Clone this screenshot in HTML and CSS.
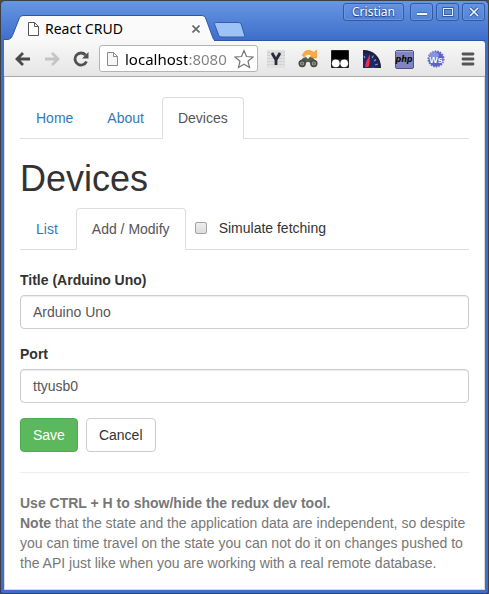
FILE: index.html
```html
<!DOCTYPE html>
<html lang="en">
<head>
<meta charset="utf-8">
<meta name="viewport" content="width=device-width, initial-scale=1">
<title>React CRUD</title>
<link rel="stylesheet" href="styles.css">
</head>
<body>
<div class="window">
  <header class="titlebar">
    <div class="browser-tab">
      <svg class="tab-shape" viewBox="0 0 210 26" preserveAspectRatio="none" aria-hidden="true">
        <path d="M0 26V24.500H3C6 24.500 7.500 23 8.500 20.500L15 4C16 1.500 17 .5 20 .5H197C200 .5 201 1.500 202 4L208 20.500C209 23 209.500 24.500 210 24.500V26Z" fill="#fafafa" stroke="#2f56a5"/>
        <path d="M0 25.500H210" stroke="#f8f8f8"/>
      </svg>
      <svg class="page-icon" viewBox="0 0 11 14" aria-hidden="true"><path d="M.5.5H6.500L10.500 4.500V13.500H.5ZM6.500.5V4.500H10.500" fill="#fff" stroke="#555"/></svg>
      <span class="tab-title">React CRUD</span>
      <button class="tab-close" aria-label="Close tab"><svg viewBox="0 0 8 8"><path d="M.5.5 7.500 7.500M7.500.5.5 7.500" stroke="#666" stroke-width="1.600"/></svg></button>
    </div>
    <button class="new-tab" aria-label="New tab"><svg viewBox="0 0 31 16"><path d="M2.500.5H24C26 .5 27 1.500 27.500 3L30.500 13C31 14.500 30.500 15 29 15H8C6 15 5 14 4.500 12.500L.8 3C0 1.500.8.5 2.500.5Z" fill="#9dc2f5" stroke="#355dab"/></svg></button>
    <div class="window-controls">
      <button class="profile">Cristian</button>
      <button class="control" aria-label="Minimize"><svg viewBox="0 0 12 10"><path d="M1 7H11" stroke="#244a92" stroke-width="3"/><path d="M1 7H11" stroke="#f2f6fc" stroke-width="2"/></svg></button>
      <button class="control" aria-label="Maximize"><svg viewBox="0 0 12 10"><path d="M1.500 1.500H10.500V8.500H1.500Z" fill="none" stroke="#244a92" stroke-width="2.500"/><path d="M1.500 1.500H10.500V8.500H1.500Z" fill="none" stroke="#e4edfa" stroke-width="1.200"/></svg></button>
      <button class="control" aria-label="Close"><svg viewBox="0 0 12 10"><path d="M2 1 10 9M10 1 2 9" stroke="#244a92" stroke-width="3"/><path d="M2 1 10 9M10 1 2 9" stroke="#f2f6fc" stroke-width="1.700"/></svg></button>
    </div>
  </header>

  <div class="toolbar">
    <button class="nav-button" aria-label="Back"><svg viewBox="0 0 16 16"><path d="M8 2 2 8 8 14M2 8H15" fill="none" stroke="#4a4a4a" stroke-width="2.800"/></svg></button>
    <button class="nav-button" aria-label="Forward"><svg viewBox="0 0 16 16"><path d="M8 2 14 8 8 14M14 8H1" fill="none" stroke="#c4c4c4" stroke-width="2.800"/></svg></button>
    <button class="nav-button" aria-label="Reload"><svg viewBox="0 0 16 16"><path d="M12.500 4A6 6 0 1 0 13.500 10.500" fill="none" stroke="#505050" stroke-width="2.800"/><path d="M15.500 1V7.500H9Z" fill="#505050"/></svg></button>
    <div class="address">
      <svg class="page-icon" viewBox="0 0 11 14" aria-hidden="true"><path d="M.5.5H6.500L10.500 4.500V13.500H.5ZM6.500.5V4.500H10.500" fill="#f6f6f6" stroke="#8a8a8a"/></svg>
      <input class="address-input" type="text" aria-label="Address" value="localhost:8080">
      <button class="bookmark" aria-label="Bookmark"><svg viewBox="0 0 20 20"><path d="M10 1.500 12.500 7.500 19 8 14 12.200 15.500 18.500 10 15.200 4.500 18.500 6 12.200 1 8 7.500 7.500Z" fill="#fff" stroke="#777" stroke-width="1.200"/></svg></button>
    </div>
    <div class="extensions">
      <button class="extension" aria-label="Y extension"><svg viewBox="0 0 20 20"><path d="M1 1H19V19H1Z" fill="#e1e1e1"/><path d="M1 3.500H19M1 6.500H19M1 9.500H19M1 12.500H19M1 15.500H19" stroke="#cecece" stroke-dasharray="3 1"/><path d="M6 4 10 11 14 4M10 10V16" fill="none" stroke="#252b3a" stroke-width="2.800"/></svg></button>
      <button class="extension" aria-label="Binoculars"><svg viewBox="0 0 20 20"><path d="M4.500 7C5 3 8 1 12 1.500L16 3.500 18.500 1V9H11L13.500 6.500C11 4.500 8 5 7 7.500Z" fill="#ffad42" stroke="#e98a1b" stroke-width=".6"/><path d="M5 9 8 8 10 10 12 8 15 9 19.500 14 15 17 11 13H9L5 17 .5 14Z" fill="#555b50"/><circle cx="4.200" cy="14.500" r="2.900" fill="#a3a89d" stroke="#444a42" stroke-width="1.600"/><circle cx="15.800" cy="14.500" r="2.900" fill="#a3a89d" stroke="#444a42" stroke-width="1.600"/><circle cx="4.200" cy="14.500" r="1.200" fill="#62685c"/><circle cx="15.800" cy="14.500" r="1.200" fill="#62685c"/></svg></button>
      <button class="extension" aria-label="Script manager"><svg viewBox="0 0 20 20"><rect x="1" y="1" width="18" height="18" rx="1" fill="#222"/><path d="M2 2H18V10H2Z" fill="#000"/><circle cx="5.800" cy="14.300" r="3.900" fill="#fff"/><circle cx="14.200" cy="14.300" r="3.900" fill="#fff"/></svg></button>
      <button class="extension" aria-label="Speed gauge"><svg viewBox="0 0 20 20"><path d="M1 1C12 1 19 8 19 19H1Z" fill="#20246b"/><path d="M1 2.500C11 3 17 9 17.500 19" fill="none" stroke="#20232c" stroke-width="2.500"/><path d="M10 9 11.500 6.500M12 12 14 10.500M13 16 16 15M3 9 2 7" stroke="#8798d4" stroke-width="1.200"/><path d="M3 18 4 13 8 5 7.500 14 6.500 18Z" fill="#ef3038"/><path d="M8 18A5 5 0 0 1 13 19Z" fill="#4a58aa"/></svg></button>
      <button class="extension" aria-label="PHP"><svg viewBox="0 0 20 20"><rect x="1.500" y="1.500" width="18" height="18" rx="1.500" fill="#8184be" stroke="#50538b"/><path d="M2 2.500H19" stroke="#a5a8dc"/><text class="php-text" x="10" y="13" text-anchor="middle">php</text></svg></button>
      <button class="extension" aria-label="Ws"><svg viewBox="0 0 20 20"><circle cx="10" cy="10" r="7.500" fill="#5964c8" stroke="#626bc5" stroke-width="2" stroke-dasharray="1.600 1"/><circle cx="10" cy="10" r="7" fill="#5964c8"/><ellipse cx="8" cy="6" rx="5" ry="3" fill="#8994df"/><text class="ws-text" x="10" y="13.500" text-anchor="middle">Ws</text></svg></button>
      <button class="extension" aria-label="Menu"><svg viewBox="0 0 20 20"><path d="M5 5H15M5 10H15M5 15H15" stroke="#555" stroke-width="2.800" stroke-linecap="round"/></svg></button>
    </div>
  </div>

  <main class="page">
    <nav class="tabs">
      <a class="tab" href="#home">Home</a>
      <a class="tab" href="#about">About</a>
      <a class="tab active" href="#devices">Devices</a>
    </nav>
    <h1>Devices</h1>
    <div class="tabs">
      <a class="tab" href="#list">List</a>
      <a class="tab active" href="#edit">Add / Modify</a>
      <label class="simulate"><input type="checkbox">Simulate fetching</label>
    </div>
    <form class="device-form">
      <div class="field">
        <label for="title">Title (Arduino Uno)</label>
        <input id="title" type="text" value="Arduino Uno">
      </div>
      <div class="field">
        <label for="port">Port</label>
        <input id="port" type="text" value="ttyusb0">
      </div>
      <div class="actions">
        <button class="btn save" type="button">Save</button>
        <button class="btn" type="button">Cancel</button>
      </div>
    </form>
    <hr>
    <p class="note"><strong>Use CTRL + H to show/hide the redux dev tool.</strong></p>
    <p class="note"><strong>Note</strong> that the state and the application data are independent, so despite you can time travel on the state you can not do it on changes pushed to the API just like when you are working with a real remote database.</p>
  </main>
</div>
</body>
</html>
```
FILE: styles.css
```css
* { box-sizing: border-box; }

body {
  margin: 0;
  background: #4b4b4b;
  color: #333;
  font: 14px/20px "Liberation Sans", Arial, sans-serif;
}

button, input { margin: 0; font: inherit; }
button { padding: 0; border: 0; background: none; }
svg { display: block; }

.window {
  display: flex;
  flex-direction: column;
  min-height: 100vh;
  padding: 0 3px 3px;
  border: 1px solid #3b4046;
  border-radius: 5px 5px 3px 3px;
  background: linear-gradient(#6697e2, #3e6dca 40px);
}

.titlebar {
  display: flex;
  align-items: flex-end;
  height: 40px;
  box-shadow: inset 0 -1px #2f56a5;
}

.browser-tab {
  position: relative;
  display: flex;
  align-items: center;
  width: 210px;
  height: 26px;
  padding: 2px 14px 0 24px;
  gap: 6px;
}
.tab-shape { position: absolute; inset: 0; width: 100%; height: 100%; }
.page-icon { position: relative; flex: none; width: 11px; height: 14px; }
.tab-title {
  position: relative;
  flex: 1;
  color: #000;
  font: 14px/20px "Noto Sans", "Open Sans", sans-serif;
}
.tab-close { position: relative; }
.tab-close svg { width: 8px; height: 8px; }
.new-tab { padding-bottom: 3px; }
.new-tab svg { width: 31px; height: 16px; }

.window-controls {
  display: flex;
  align-self: flex-start;
  gap: 3px;
  margin-left: auto;
  padding-top: 2px;
}
.profile, .control {
  height: 18px;
  border: 1px solid #3159a6;
  border-radius: 3px;
  box-shadow: inset 0 0 0 1px #6c95dd;
}
.profile {
  width: 61px;
  margin-right: 3px;
  color: #fff;
  font: 12px/16px "Noto Sans", "Open Sans", sans-serif;
  text-shadow: 0 0 2px #1c3d80, 0 1px 1px #1c3d80;
}
.control { display: grid; place-items: center; width: 23px; }
.control svg { width: 12px; height: 10px; }

.toolbar {
  display: flex;
  align-items: center;
  height: 36px;
  padding-left: 4px;
  border-bottom: 1px solid #aaa;
  border-radius: 0 3px 0 0;
  background: linear-gradient(#f8f8f8, #e5e5e5);
}
.nav-button { display: grid; place-items: center; width: 29px; height: 28px; }
.nav-button svg { width: 16px; height: 16px; }

.address {
  display: flex;
  flex: 1;
  align-items: center;
  min-width: 0;
  height: 27px;
  margin: 0 2px 0 4px;
  padding: 0 3px 0 7px;
  border: 1px solid #b3b3b3;
  border-radius: 3px;
  background: #fff;
}
.address-input {
  flex: 1;
  min-width: 0;
  height: 25px;
  padding: 0 0 0 7px;
  border: 0;
  outline: 0;
  background: linear-gradient(90deg, #000 69px, #808080 69px);
  background-clip: text;
  color: transparent;
  font: 15px/24px "Noto Sans", "Open Sans", sans-serif;
}
.bookmark svg { width: 20px; height: 20px; }
.extensions { display: flex; padding-right: 1px; }
.extension { display: grid; place-items: center; width: 32px; height: 28px; }
.extension svg { width: 20px; height: 20px; }
.php-text { fill: #080808; font: italic bold 8px "DejaVu Sans", sans-serif; }
.ws-text { fill: #fff; font: bold 9px "Liberation Sans", sans-serif; }

.page {
  flex: 1;
  padding: 20px 15px 16px;
  border: solid #d9d9d9;
  border-width: 0 1px 1px;
  background: #fff;
}

.tabs { display: flex; height: 42px; border-bottom: 1px solid #ddd; }
.tab {
  height: 42px;
  margin-right: 2px;
  padding: 10px 15px;
  border: 1px solid transparent;
  border-radius: 4px 4px 0 0;
  color: #337ab7;
  text-decoration: none;
}
.tab.active { border-color: #ddd #ddd #fff; background: #fff; color: #555; }

h1 { margin: 20px 0 10px; font-size: 36px; font-weight: 500; line-height: 39px; }

.simulate {
  display: flex;
  align-items: center;
  gap: 12px;
  height: 40px;
  padding-left: 7px;
}
.simulate input {
  appearance: none;
  width: 12px;
  height: 12px;
  border: 1px solid #a3a3a3;
  border-radius: 2px;
  background: linear-gradient(#eee, #dcdcdc);
}
.simulate input:checked { background: #337ab7; }

.device-form { margin-top: 20px; }
.field { margin-bottom: 15px; }
.field label { display: block; margin-bottom: 5px; font-weight: bold; }
.field input {
  display: block;
  width: 100%;
  height: 34px;
  padding: 6px 12px;
  border: 1px solid #ccc;
  border-radius: 4px;
  background: #fff;
  box-shadow: inset 0 1px 1px rgba(0, 0, 0, .075);
  color: #555;
}
.actions { display: flex; gap: 8px; }
.btn {
  height: 34px;
  padding: 6px 12px;
  border: 1px solid #ccc;
  border-radius: 4px;
  background: #fff;
  color: #333;
}
.btn.save { border-color: #4cae4c; background: #5cb85c; color: #fff; }

hr { margin: 20px 0; border: 0; border-top: 1px solid #eee; }
.note { margin: 0; color: #777; }
```
